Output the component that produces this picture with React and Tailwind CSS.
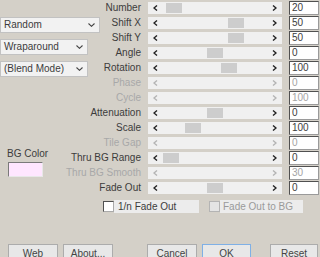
import React from "react";

const rows = [
  { label: "Number", value: "20", thumb: 18 },
  { label: "Shift X", value: "50", thumb: 80 },
  { label: "Shift Y", value: "50", thumb: 80 },
  { label: "Angle", value: "0", thumb: 59 },
  { label: "Rotation", value: "100", thumb: 73 },
  { label: "Phase", value: "0", disabled: true },
  { label: "Cycle", value: "100", disabled: true },
  { label: "Attenuation", value: "0", thumb: 59 },
  { label: "Scale", value: "100", thumb: 37 },
  { label: "Tile Gap", value: "0", disabled: true },
  { label: "Thru BG Range", value: "0", thumb: 15 },
  { label: "Thru BG Smooth", value: "30", disabled: true },
  { label: "Fade Out", value: "0", thumb: 59 },
];

const Chevron = ({ dir, disabled }) => (
  <svg width="5" height="6" viewBox="0 0 5 6" className="block">
    <polyline
      points={dir === "left" ? "4,0.5 1,3 4,5.5" : "1,0.5 4,3 1,5.5"}
      fill="none"
      stroke={disabled ? "#b4b4b4" : "#222"}
      strokeWidth="1.4"
    />
  </svg>
);

const Down = () => (
  <svg width="7" height="4" viewBox="0 0 7 4" className="block">
    <polyline points="0.5,0.5 3.5,3.3 6.5,0.5" fill="none" stroke="#444" strokeWidth="1.1" />
  </svg>
);

const Combo = ({ text, w }) => (
  <div className={`${w} h-[16px] flex items-center justify-between pl-[3px] pr-[4px] bg-[#f2f2f2] border border-[#c2c2c2] text-[#3c3c3c]`}>
    <span>{text}</span>
    <Down />
  </div>
);

const Button = ({ children, w, ok }) => (
  <div
    className={`${w} h-[19px] flex items-center justify-center border ${
      ok ? "border-[#7fb0e6] bg-[#e8e8e8]" : "border-[#acacac] bg-[#e8e8e8]"
    } text-[#444]`}
  >
    {children}
  </div>
);

export default function App() {
  return (
    <div
      className="w-[320px] h-[257px] overflow-hidden bg-[#d4d0c8] flex flex-col text-[10px] leading-[12px]"
      style={{ fontFamily: '"Liberation Sans", Arial, sans-serif' }}
    >
      <div className="flex">
        {/* left column: combos + bg color */}
        <div className="w-[100px] flex flex-col pt-[17px]">
          <Combo text="Random" w="w-[100px]" />
          <div className="mt-[6px]">
            <Combo text="Wraparound" w="w-[88px]" />
          </div>
          <div className="mt-[6px]">
            <Combo text="(Blend Mode)" w="w-[88px]" />
          </div>
          <div className="mt-[71px] pl-[7px] text-[#3c3c3c]">BG Color</div>
          <div className="mt-[2px] ml-[8px] w-[35px] h-[15px] bg-[#ffe6ff] border border-t-[#7a7a7a] border-l-[#7a7a7a] border-r-[#e8e8e8] border-b-[#e8e8e8]" />
        </div>

        {/* right: slider rows */}
        <div className="flex flex-col">
          {rows.map((r) => (
            <div key={r.label} className="flex items-center h-[15px]">
              <div className="w-[41px] flex justify-end">
                <span className={`whitespace-nowrap ${r.disabled ? "text-[#a8a8a8]" : "text-[#3c3c3c]"}`}>
                  {r.label}
                </span>
              </div>
              <div className="ml-[7px] w-[134px] h-[12px] relative bg-[#f0f0f0] flex items-center justify-between px-[5px]">
                {r.thumb !== undefined && (
                  <div className="absolute top-[1px] h-[10px] w-[16px] bg-[#cdcdcd]" style={{ left: r.thumb }} />
                )}
                <Chevron dir="left" disabled={r.disabled} />
                <Chevron dir="right" disabled={r.disabled} />
              </div>
              <div
                className={`ml-[7px] w-[30px] h-[14px] bg-white flex items-center pl-[2px] border border-t-[#505050] border-l-[#505050] border-r-[#9a9a9a] border-b-[#9a9a9a] ${
                  r.disabled ? "text-[#a4a4a4]" : "text-[#3c3c3c]"
                }`}
              >
                {r.value}
              </div>
            </div>
          ))}

          <div className="flex items-center mt-[5px] pl-[3px] h-[13px]">
            <div className="w-[11px] h-[11px] bg-white border border-t-[#505050] border-l-[#505050] border-r-[#aaaaaa] border-b-[#aaaaaa]" />
            <div className="w-[85px] h-[13px] bg-[#ececec] flex items-center pl-[4px] text-[#3c3c3c]">1/n Fade Out</div>
            <div className="ml-[10px] w-[11px] h-[11px] bg-[#e4e4e4] border border-[#b4b4b4]" />
            <div className="w-[83px] h-[13px] bg-[#ececec] flex items-center pl-[3px] text-[#9a9a9a]">Fade Out to BG</div>
          </div>
        </div>
      </div>

      {/* bottom buttons */}
      <div className="flex mt-[31px] pl-[8px]">
        <Button w="w-[50px]">Web</Button>
        <div className="ml-[5px]">
          <Button w="w-[50px]">About...</Button>
        </div>
        <div className="ml-[34px]">
          <Button w="w-[50px]">Cancel</Button>
        </div>
        <div className="ml-[5px]">
          <Button w="w-[49px]" ok>OK</Button>
        </div>
        <div className="ml-[19px]">
          <Button w="w-[48px]">Reset</Button>
        </div>
      </div>
    </div>
  );
}
